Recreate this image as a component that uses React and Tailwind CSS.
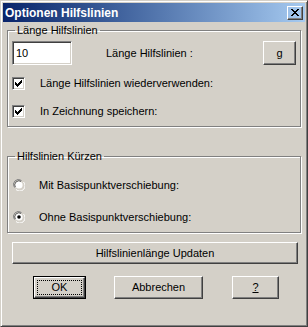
import React from 'react';

const font = { fontFamily: '"Liberation Sans", Arial, sans-serif' };

const Btn = ({ className = '', children, isDefault }) => (
  <div className={`${isDefault ? 'border border-black' : ''} ${className}`}>
    <div className="w-full h-full border border-t-white border-l-white border-r-[#404040] border-b-[#404040] shadow-[inset_-1px_-1px_0_#808080] flex items-center justify-center text-[11px] text-black">
      {children}
    </div>
  </div>
);

const Check = () => (
  <div className="w-[13px] h-[13px] bg-white border border-t-[#808080] border-l-[#808080] border-r-white border-b-white shadow-[inset_1px_1px_0_#404040,inset_-1px_-1px_0_#d4d0c8] flex items-center justify-center">
    <svg width="7" height="7" viewBox="0 0 7 7" className="block">
      <path d="M0 2h1v1h1v1h1V3h1V2h1V1h1V0h1v3h-1v1h-1v1h-1v1h-1v1H2V6H1V5H0z" fill="#000" />
    </svg>
  </div>
);

const Radio = ({ on }) => (
  <svg width="12" height="12" viewBox="0 0 12 12" className="block">
    <path d="M1.5 8.5 A5 5 0 0 1 8.5 1.5" stroke="#808080" strokeWidth="1" fill="none" />
    <path d="M2.5 8 A4 4 0 0 1 8 2.5" stroke="#404040" strokeWidth="1" fill="none" />
    <path d="M3 10.5 A5 5 0 0 0 10.5 3" stroke="#ffffff" strokeWidth="1" fill="none" />
    <circle cx="6" cy="6" r="3.6" fill="#fff" />
    {on && <circle cx="6" cy="6" r="1.8" fill="#000" />}
  </svg>
);

const Group = ({ title, className = '', children }) => (
  <fieldset className={`border border-[#808080] shadow-[inset_1px_1px_0_#fff,1px_1px_0_#fff] mx-[4px] ${className}`}>
    <legend className="ml-[7px] px-[2px] text-[11px] leading-[13px] text-black">{title}</legend>
    {children}
  </fieldset>
);

export default function App() {
  return (
    <div style={font} className="w-[308px] h-[327px] bg-[#d4d0c8] border border-t-[#d4d0c8] border-l-[#d4d0c8] border-r-[#404040] border-b-[#404040] shadow-[inset_1px_1px_0_#fff,inset_-1px_-1px_0_#808080] p-[2px] flex flex-col">
      <div className="h-[19px] flex items-center justify-between bg-gradient-to-r from-[#0a246a] to-[#a6caf0] pl-[2px] pr-[2px]">
        <span className="text-white font-bold text-[12px] leading-[14px]">Optionen Hilfslinien</span>
        <Btn className="w-[16px] h-[14px]">
          <svg width="8" height="7" viewBox="0 0 8 7" className="block">
            <path d="M0 0h2v1h1v1h2V1h1V0h2v1H7v1H6v1H5v1h1v1h1v1h1v1H6V6H5V5H3v1H2v1H0V6h1V5h1V4h1V3H2V2H1V1H0z" fill="#000" />
          </svg>
        </Btn>
      </div>

      <Group title="Länge Hilfslinien" className="mt-[2px] h-[103px]">
        <div className="flex items-center mt-[4px] ml-[4px]">
          <div className="w-[60px] h-[24px] bg-white border border-t-[#808080] border-l-[#808080] border-r-white border-b-white shadow-[inset_1px_1px_0_#404040,inset_-1px_-1px_0_#d4d0c8] flex items-center pl-[3px] text-[11px] text-black">10</div>
          <span className="ml-[34px] text-[11px] text-black">Länge Hilfslinien :</span>
          <Btn className="ml-auto mr-[4px] w-[33px] h-[24px]">g</Btn>
        </div>
        <div className="flex items-center mt-[12px] ml-[4px] h-[13px]">
          <Check />
          <span className="ml-[15px] text-[11px] text-black">Länge Hilfslinien wiederverwenden:</span>
        </div>
        <div className="flex items-center mt-[15px] ml-[4px] h-[13px]">
          <Check />
          <span className="ml-[15px] text-[11px] text-black">In Zeichnung speichern:</span>
        </div>
      </Group>

      <Group title="Hilfslinien Kürzen" className="mt-[23px] h-[83px]">
        <div className="flex items-center mt-[16px] ml-[5px] h-[12px]">
          <Radio />
          <span className="ml-[14px] text-[11px] text-black">Mit Basispunktverschiebung:</span>
        </div>
        <div className="flex items-center mt-[20px] ml-[5px] h-[12px]">
          <Radio on />
          <span className="ml-[14px] text-[11px] text-black">Ohne Basispunktverschiebung:</span>
        </div>
      </Group>

      <Btn className="mt-[9px] ml-[9px] w-[286px] h-[22px]">Hilfslinienlänge Updaten</Btn>

      <div className="flex mt-[12px]">
        <Btn isDefault className="ml-[30px] w-[53px] h-[23px]">
          <span className="flex-1 self-stretch m-[2px] border border-dotted border-black flex items-center justify-center">OK</span>
        </Btn>
        <Btn className="ml-[28px] w-[89px] h-[23px]">Abbrechen</Btn>
        <Btn className="ml-[29px] w-[47px] h-[23px]"><span className="underline">?</span></Btn>
      </div>
    </div>
  );
}
